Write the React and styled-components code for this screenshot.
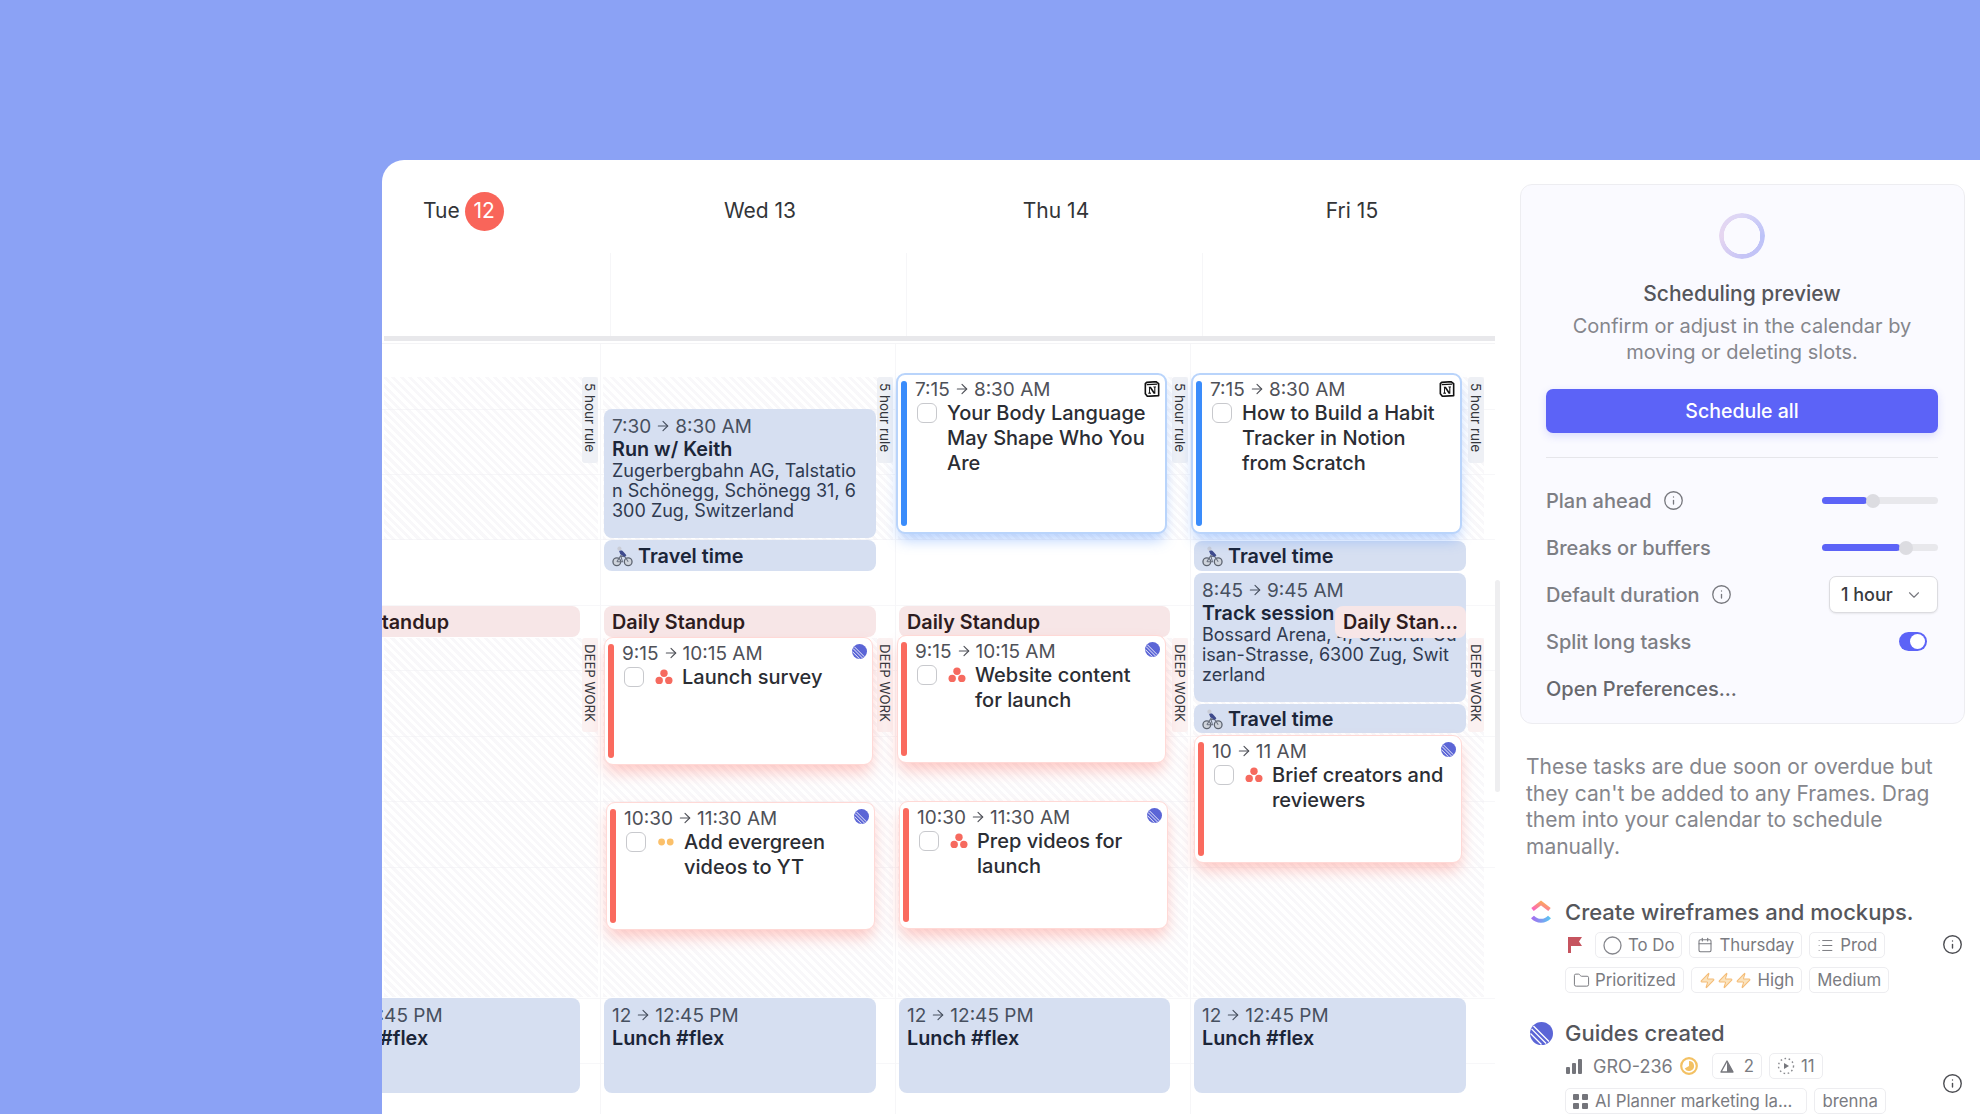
import React from 'react';
import styled, { createGlobalStyle, css } from 'styled-components';
import { ArrowRight, Calendar, ChevronDown, Folder, Info, List, Zap } from 'lucide-react';

const GlobalStyle = createGlobalStyle`
    html, body {
        margin: 0;
        height: 1114px;
        overflow: hidden;
        background: #8ba2f5;
        font-family: Inter, "Noto Sans", sans-serif;
    }
    * { box-sizing: border-box; }
`;

const Page = styled.div`
    height: 1114px;
    padding: 160px 0 0 382px;
    overflow: hidden;
`;

const AppWindow = styled.div`
    position: relative;
    display: flex;
    height: 954px;
    background: #fff;
    border-top-left-radius: 22px;
    overflow: hidden;
`;

const CalendarPane = styled.div`
    width: 1113px;
    flex-shrink: 0;
`;

const Head = styled.div`
    display: grid;
    grid-template-columns: 228px repeat(3, 296px);
    height: 176px;
`;

const HeadCell = styled.div`
    display: flex;
    flex-direction: column;
`;

const DayLabel = styled.div`
    display: flex;
    align-items: center;
    justify-content: ${({ $today }) => ($today ? 'flex-start' : 'center')};
    gap: 5px;
    height: 93px;
    padding: ${({ $today }) => ($today ? '33px 0 24px 41px' : '33px 0 24px 4px')};
    font-size: 21px;
    line-height: 36px;
    color: #333538;
`;

const TodayBadge = styled.span`
    display: flex;
    align-items: center;
    justify-content: center;
    width: 39px;
    height: 39px;
    border-radius: 50%;
    background: #f9655a;
    color: #fff;
    font-size: 21px;
`;

const AllDay = styled.div`
    flex: 1;
    border-left: ${({ $first }) => ($first ? 'none' : '1px solid #f6f6f8')};
`;

const HeadRule = styled.div`
    height: 5px;
    margin-left: 2px;
    background: #e8e8eb;
`;

const SubRule = styled.div`
    height: 3px;
    border-bottom: 1px solid #f4f4f6;
`;

const Grid = styled.div`
    display: grid;
    grid-template-columns: 218px 295px 295px 296px;
    height: 770px;
    background: repeating-linear-gradient(
        to bottom,
        transparent 0 64.5px,
        #f7f7f9 64.5px 65.5px
    );
`;

const Day = styled.div`
    position: relative;
    border-left: ${({ $first }) => ($first ? 'none' : '1px solid #f6f6f8')};
`;

const placed = css`
    position: absolute;
    top: ${({ $top }) => $top}px;
    left: ${({ $left }) => $left}px;
    height: ${({ $height }) => $height}px;
    width: ${({ $width }) => $width}px;
`;

const Hatch = styled.div`
    position: absolute;
    top: ${({ $top }) => $top}px;
    height: ${({ $height }) => $height}px;
    left: 2px;
    right: 2px;
    background: repeating-linear-gradient(
        45deg,
        rgba(240, 238, 243, 0.42) 0 3px,
        transparent 3px 6px
    );
`;

const FrameTag = styled.div`
    position: absolute;
    top: ${({ $top }) => $top}px;
    height: ${({ $height }) => $height}px;
    right: 2px;
    width: 16px;
    padding-top: 6px;
    display: flex;
    justify-content: flex-start;
    align-items: center;
    writing-mode: vertical-rl;
    border-radius: 3px;
    background: ${({ $deep }) => ($deep ? '#fbf1f1' : '#eef0f5')};
    color: #34363c;
    font-size: ${({ $deep }) => ($deep ? '13.2px' : '13.5px')};
    line-height: 16px;
    white-space: nowrap;
`;

const Block = styled.div`
    ${placed}
    z-index: ${({ $z }) => $z || 1};
    padding: ${({ $flat }) => ($flat ? '1px 8px 0' : '5px 8px 0')};
    border-radius: 8px;
    background: ${({ $tone }) => ($tone === 'red' ? '#f7e6e7' : '#d6dff1')};
    display: ${({ $flat }) => ($flat ? 'flex' : 'block')};
    align-items: center;
    overflow: hidden;
`;

const BlockTitle = styled.div`
    display: flex;
    align-items: center;
    gap: 5px;
    font-size: 19.8px;
    font-weight: 600;
    line-height: 23px;
    color: ${({ $tone }) => ($tone === 'red' ? '#2e1c20' : '#1b2538')};
    white-space: nowrap;
`;

const Address = styled.div`
    padding-right: ${({ $inset }) => $inset || 0}px;
    font-size: 18px;
    line-height: 20px;
    color: #2f3a50;
    word-break: break-all;
`;

const TimeRow = styled.div`
    display: flex;
    align-items: center;
    gap: 4px;
    height: 24px;
    font-size: 19px;
    color: ${({ $onBlock }) => ($onBlock ? '#47505f' : '#4f5158')};
    white-space: nowrap;
    svg { color: inherit; }
`;

const Card = styled.div`
    ${placed}
    z-index: 2;
    padding: ${({ $tone }) => ($tone === 'blue' ? '2px' : '3px')} 8px 0 17px;
    background: #fff;
    border-radius: 9px;
    ${({ $tone }) =>
        $tone === 'blue'
            ? css`
                  border: 2px solid #b9d4fb;
                  box-shadow: 0 9px 14px -3px rgba(70, 140, 255, 0.4);
              `
            : css`
                  border: 1.5px solid #ffd9d6;
                  box-shadow: 0 9px 16px -2px rgba(255, 110, 100, 0.38);
              `}
`;

const Bar = styled.div`
    position: absolute;
    left: 3px;
    top: 6px;
    bottom: 6px;
    width: 6px;
    border-radius: 3px;
    background: ${({ $tone }) => ($tone === 'blue' ? '#3a8cfb' : '#fa6a5e')};
`;

const Corner = styled.div`
    position: absolute;
    top: 6px;
    right: 5px;
    line-height: 0;
`;

const CardBody = styled.div`
    display: flex;
    align-items: flex-start;
`;

const Check = styled.div`
    flex-shrink: 0;
    width: 20px;
    height: 20px;
    margin: 2px 10px 0 2px;
    border: 1.5px solid #c8c9cd;
    border-radius: 6px;
`;

const Source = styled.div`
    flex-shrink: 0;
    width: 18px;
    height: 24px;
    margin: 0 9px 0 1px;
    display: flex;
    align-items: center;
`;

const CardTitle = styled.div`
    font-size: 20px;
    font-weight: 500;
    line-height: 25px;
    color: #2b2d33;
`;

const Overflow = styled.div`
    position: absolute;
    left: 1113px;
    top: 420px;
    width: 5px;
    height: 212px;
    background: #eeeef0;
    border-radius: 3px;
`;

const Side = styled.div`
    flex: 1;
    padding: 24px 15px 0 25px;
`;

const PreviewCard = styled.div`
    height: 540px;
    padding: 28px 26px 0 25px;
    background: #fafaff;
    border: 1px solid #ededf1;
    border-radius: 12px;
`;

const Spinner = styled.div`
    width: 46px;
    height: 46px;
    margin: 0 auto 21px;
    border-radius: 50%;
    background: conic-gradient(#dcd6f6, #bcc2f8, #c6c4f6, #e6d6f0, #dcd6f6);
    -webkit-mask: radial-gradient(circle, transparent 18px, #000 18.5px);
    mask: radial-gradient(circle, transparent 18px, #000 18.5px);
`;

const PreviewTitle = styled.div`
    font-size: 21px;
    font-weight: 500;
    line-height: 28px;
    color: #55565b;
    text-align: center;
    margin-bottom: 5px;
`;

const PreviewText = styled.div`
    font-size: 20px;
    line-height: 26px;
    color: #85868c;
    text-align: center;
    margin-bottom: 24px;
`;

const PrimaryButton = styled.div`
    display: flex;
    align-items: center;
    justify-content: center;
    height: 44px;
    border-radius: 7px;
    background: #5c63f7;
    box-shadow: 0 3px 8px rgba(92, 99, 247, 0.2);
    color: #fff;
    font-size: 19.5px;
    font-weight: 500;
`;

const Divider = styled.div`
    height: 1px;
    margin: 24px 0 19px;
    background: #e6e6ea;
`;

const SettingRow = styled.div`
    display: flex;
    align-items: center;
    justify-content: space-between;
    height: 47px;
`;

const SettingLabel = styled.div`
    display: flex;
    align-items: center;
    gap: 11px;
    font-size: 20px;
    font-weight: 500;
    color: ${({ $dark }) => ($dark ? '#66676c' : '#7d7e84')};
    svg { color: #77787e; }
`;

const Track = styled.div`
    position: relative;
    width: 116px;
    height: 7px;
    border-radius: 4px;
    background: #e8e8ec;
`;

const TrackFill = styled.div`
    height: 100%;
    width: ${({ $value }) => $value}%;
    border-radius: 4px;
    background: #5c63f7;
`;

const Thumb = styled.div`
    position: absolute;
    top: -3.5px;
    left: calc(${({ $value }) => $value}% - 1px);
    width: 14px;
    height: 14px;
    border-radius: 50%;
    background: #dcdce1;
`;

const Select = styled.div`
    display: flex;
    align-items: center;
    justify-content: space-between;
    width: 109px;
    height: 37px;
    padding: 0 14px 0 11px;
    background: #fff;
    border: 1px solid #dcdce0;
    border-radius: 7px;
    box-shadow: 0 1px 2px rgba(0, 0, 0, 0.08);
    font-size: 18px;
    font-weight: 500;
    color: #3a3b40;
    svg { color: #77787e; }
`;

const Toggle = styled.div`
    width: 28px;
    height: 19px;
    margin-right: 11px;
    padding: 2px;
    display: flex;
    justify-content: flex-end;
    border-radius: 10px;
    background: #5c63f7;
    &::after {
        content: '';
        width: 15px;
        height: 15px;
        border-radius: 50%;
        background: #fff;
    }
`;

const DueText = styled.p`
    margin: 30px 0 38px 6px;
    font-size: 21px;
    line-height: 26.5px;
    color: #85868c;
`;

const Task = styled.div`
    display: grid;
    grid-template-columns: 35px 1fr 21px;
    row-gap: 6px;
    margin: 0 2px 26px 10px;
`;

const TaskLogo = styled.div`
    display: flex;
    align-items: center;
    height: 28px;
`;

const TaskTitle = styled.div`
    grid-column: 2 / 4;
    font-size: 22px;
    font-weight: 500;
    line-height: 28px;
    color: #55565b;
`;

const ChipStack = styled.div`
    grid-column: 2;
    display: flex;
    flex-direction: column;
    gap: 9px;
`;

const ChipRow = styled.div`
    display: flex;
    align-items: center;
    gap: 7px;
`;

const Chip = styled.div`
    display: flex;
    align-items: center;
    gap: ${({ $gap }) => $gap || 6}px;
    height: 26px;
    padding: 0 ${({ $endPad }) => $endPad || 7}px 0 7px;
    border: 1px solid #ededf0;
    border-radius: 5px;
    font-size: 16.8px;
    color: #7a7b81;
    white-space: nowrap;
    svg { flex-shrink: 0; }
`;

const Bare = styled.div`
    display: flex;
    align-items: center;
    gap: 6px;
    width: 27px;
    flex-shrink: 0;
    margin-left: ${({ $inset }) => $inset || 0}px;
    margin-right: -7px;
`;

const TrackerId = styled.div`
    display: flex;
    align-items: center;
    gap: 7px;
    margin-right: 7px;
    font-size: 18px;
    color: #7a7b81;
`;

const InfoSlot = styled.div`
    grid-column: 3;
    margin-top: ${({ $offset }) => $offset}px;
    line-height: 0;
    color: #4d4e53;
`;

const LinearMark = ({ size = 15 }) => (
    <svg width={size} height={size} viewBox="0 0 24 24">
        <circle cx="12" cy="12" r="12" fill="#5b65d6" />
        <path
            d="M0.5 12 12 23.5M1.6 7.2 16.8 22.4M3.6 4.2 19.8 20.4"
            stroke="#fff"
            strokeWidth="1.4"
        />
    </svg>
);

const NotionMark = () => (
    <svg width="16" height="16" viewBox="0 0 24 24">
        <path d="M4 2 18 1l4 3v18l-17 1-3-4V4z" fill="#fff" stroke="#111" strokeWidth="2.4" strokeLinejoin="round" />
        <path d="M4 5.5 20 4.6" stroke="#111" strokeWidth="2" />
        <path d="M7 8.5h3.4l5 7.6V9.6l-1.4-.3V8.2h4v1.1l-1 .3V19h-2.6L9 11v6.4l1.5.4V19H6.4v-1.2l1.2-.4V9.6L7 9.4z" fill="#111" />
    </svg>
);

const AsanaMark = () => (
    <svg width="18" height="16" viewBox="0 0 18 16">
        <circle cx="9" cy="4.2" r="3.7" fill="#f66a5f" />
        <circle cx="4.2" cy="11.4" r="3.7" fill="#f66a5f" />
        <circle cx="13.8" cy="11.4" r="3.7" fill="#f66a5f" />
    </svg>
);

const PriorityDots = () => (
    <svg width="18" height="16" viewBox="0 0 18 16">
        <circle cx="4.6" cy="8" r="3.4" fill="#fbc06a" />
        <circle cx="13.2" cy="8" r="3.4" fill="#fbc06a" />
    </svg>
);

const BikeMark = () => (
    <svg width="21" height="21" viewBox="0 0 24 24">
        <circle cx="5.5" cy="18" r="4.4" fill="#cfd4dc" stroke="#5d6470" strokeWidth="1.5" />
        <circle cx="18.5" cy="18" r="4.4" fill="#cfd4dc" stroke="#5d6470" strokeWidth="1.5" />
        <path d="M5.5 18 10 11l5 1.5 3.5 5.5M10 11l2 7h-6" fill="none" stroke="#6b7280" strokeWidth="1.2" />
        <path d="M8 5.5c2-1.5 4-.5 5.5 1.5l3 3.5-2 2-5-3z" fill="#3e4a8c" />
        <circle cx="8.5" cy="3" r="2.4" fill="#c9ccd6" />
    </svg>
);

const ClickUpMark = () => (
    <svg width="22" height="24" viewBox="0 0 22 24">
        <defs>
            <linearGradient id="cuTop" x1="0" x2="1" y1="1" y2="0">
                <stop offset="0" stopColor="#fb62c0" />
                <stop offset="1" stopColor="#fbb14f" />
            </linearGradient>
            <linearGradient id="cuLow" x1="0" x2="1">
                <stop offset="0" stopColor="#a36ff0" />
                <stop offset="1" stopColor="#5cc3f2" />
            </linearGradient>
        </defs>
        <path d="M2.5 9.5 11 3l8.5 6.500" fill="none" stroke="url(#cuTop)" strokeWidth="4" />
        <path d="M2.500 17c4.500 5 12.500 5 17 0" fill="none" stroke="url(#cuLow)" strokeWidth="4" />
    </svg>
);

const FlagMark = () => (
    <svg width="14" height="16" viewBox="0 0 14 16">
        <path d="M0 0h14l-3 4.500L14 9H3v7H0z" fill="#c6545f" />
    </svg>
);

const BarsMark = () => (
    <svg width="16" height="15" viewBox="0 0 16 15" fill="#74757b">
        <rect x="0" y="8" width="4" height="7" rx="1" />
        <rect x="6" y="4" width="4" height="11" rx="1" />
        <rect x="12" y="0" width="4" height="15" rx="1" />
    </svg>
);

const ClockMark = () => (
    <svg width="18" height="18" viewBox="0 0 18 18">
        <circle cx="9" cy="9" r="7.800" fill="#fff" stroke="#f3c163" strokeWidth="2.200" />
        <path d="M9 4a5 5 0 1 1-4.300 7.500L9 9z" fill="#f3c163" />
    </svg>
);

const TriangleMark = () => (
    <svg width="14" height="13" viewBox="0 0 14 13">
        <path d="M7 1 13 12H1z" fill="#fff" stroke="#77787e" strokeWidth="1.400" strokeLinejoin="round" />
        <path d="M7 1 13 12H7z" fill="#77787e" />
    </svg>
);

const CycleMark = () => (
    <svg width="18" height="18" viewBox="0 0 18 18">
        <circle cx="9" cy="9" r="7.500" fill="none" stroke="#8a8b90" strokeWidth="1.400" strokeDasharray="1.600 2.600" />
        <path d="M7 6l5 3-5 3z" fill="#77787e" />
    </svg>
);

const GridMark = () => (
    <svg width="15" height="15" viewBox="0 0 15 15" fill="#74757b">
        <rect width="6" height="6" rx="1" />
        <rect x="9" width="6" height="6" rx="1" />
        <rect y="9" width="6" height="6" rx="1" />
        <rect x="9" y="9" width="6" height="6" rx="1" />
    </svg>
);

const Time = ({ from, to, onBlock }) => (
    <TimeRow $onBlock={onBlock}>
        {from}
        <ArrowRight size={16} strokeWidth={1.7} />
        {to}
    </TimeRow>
);

const Standup = ({ top = 262, left = 3, width = 272, height = 31, title = 'Daily Standup', z }) => (
    <Block $tone="red" $flat $top={top} $left={left} $width={width} $height={height} $z={z}>
        <BlockTitle $tone="red">{title}</BlockTitle>
    </Block>
);

const Travel = ({ top, left = 3, width = 272, height = 31 }) => (
    <Block $flat $top={top} $left={left} $width={width} $height={height}>
        <BlockTitle>
            <BikeMark />
            Travel time
        </BlockTitle>
    </Block>
);

const Lunch = ({ left = 3, width = 272 }) => (
    <Block $top={654} $left={left} $width={width} $height={95}>
        <Time from="12" to="12:45 PM" onBlock />
        <BlockTitle>Lunch #flex</BlockTitle>
    </Block>
);

const Located = ({ top, height, left = 3, width = 272, from, to, title, address, inset }) => (
    <Block $top={top} $left={left} $width={width} $height={height}>
        <Time from={from} to={to} onBlock />
        <BlockTitle>{title}</BlockTitle>
        <Address $inset={inset}>{address}</Address>
    </Block>
);

const TaskCard = ({ tone, top, left, height = 128, width = 269, from, to, title, mark }) => (
    <Card $tone={tone} $top={top} $left={left} $width={width} $height={height}>
        <Bar $tone={tone} />
        <Corner>{tone === 'blue' ? <NotionMark /> : <LinearMark />}</Corner>
        <Time from={from} to={to} />
        <CardBody>
            <Check />
            {mark && <Source>{mark}</Source>}
            <CardTitle>{title}</CardTitle>
        </CardBody>
    </Card>
);

const Bands = () => (
    <>
        <Hatch $top={33} $height={163} />
        <Hatch $top={294} $height={359} />
        <FrameTag $top={33} $height={86}>5 hour rule</FrameTag>
        <FrameTag $deep $top={294} $height={94}>DEEP WORK</FrameTag>
    </>
);

const Slider = ({ value }) => (
    <Track>
        <TrackFill $value={value} />
        <Thumb $value={value} />
    </Track>
);

export default function App() {
    return (
        <Page>
            <GlobalStyle />
            <AppWindow>
                <CalendarPane>
                    <Head>
                        <HeadCell>
                            <DayLabel $today>
                                Tue <TodayBadge>12</TodayBadge>
                            </DayLabel>
                            <AllDay $first />
                        </HeadCell>
                        <HeadCell>
                            <DayLabel>Wed 13</DayLabel>
                            <AllDay />
                        </HeadCell>
                        <HeadCell>
                            <DayLabel>Thu 14</DayLabel>
                            <AllDay />
                        </HeadCell>
                        <HeadCell>
                            <DayLabel>Fri 15</DayLabel>
                            <AllDay />
                        </HeadCell>
                    </Head>
                    <HeadRule />
                    <SubRule />
                    <Grid>
                        <Day $first>
                            <Bands />
                            <Standup left={-74} />
                            <Lunch left={-74} />
                        </Day>
                        <Day>
                            <Bands />
                            <Located
                                top={65}
                                height={129}
                                inset={4}
                                from="7:30"
                                to="8:30 AM"
                                title="Run w/ Keith"
                                address="Zugerbergbahn AG, Talstation Schönegg, Schönegg 31, 6300 Zug, Switzerland"
                            />
                            <Travel top={196} />
                            <Standup />
                            <TaskCard
                                tone="red"
                                top={293}
                                left={3}
                                from="9:15"
                                to="10:15 AM"
                                title="Launch survey"
                                mark={<AsanaMark />}
                            />
                            <TaskCard
                                tone="red"
                                top={458}
                                left={5}
                                from="10:30"
                                to="11:30 AM"
                                title="Add evergreen videos to YT"
                                mark={<PriorityDots />}
                            />
                            <Lunch />
                        </Day>
                        <Day>
                            <Bands />
                            <TaskCard
                                tone="blue"
                                top={29}
                                left={0}
                                height={161}
                                width={271}
                                from="7:15"
                                to="8:30 AM"
                                title="Your Body Language May Shape Who You Are"
                            />
                            <Standup left={3} width={271} />
                            <TaskCard
                                tone="red"
                                top={291}
                                left={1}
                                from="9:15"
                                to="10:15 AM"
                                title="Website content for launch"
                                mark={<AsanaMark />}
                            />
                            <TaskCard
                                tone="red"
                                top={457}
                                left={3}
                                from="10:30"
                                to="11:30 AM"
                                title="Prep videos for launch"
                                mark={<AsanaMark />}
                            />
                            <Lunch left={3} width={271} />
                        </Day>
                        <Day>
                            <Bands />
                            <TaskCard
                                tone="blue"
                                top={29}
                                left={0}
                                height={161}
                                width={271}
                                from="7:15"
                                to="8:30 AM"
                                title="How to Build a Habit Tracker in Notion from Scratch"
                            />
                            <Travel top={197} left={3} width={272} height={30} />
                            <Located
                                top={229}
                                height={129}
                                left={3}
                                width={272}
                                from="8:45"
                                to="9:45 AM"
                                title="Track session"
                                address="Bossard Arena, 4, General-Guisan-Strasse, 6300 Zug, Switzerland"
                            />
                            <Standup left={144} width={131} height={32} title="Daily Stan..." z={3} />
                            <Travel top={360} left={3} width={272} height={29} />
                            <TaskCard
                                tone="red"
                                top={391}
                                left={3}
                                width={268}
                                from="10"
                                to="11 AM"
                                title="Brief creators and reviewers"
                                mark={<AsanaMark />}
                            />
                            <Lunch left={3} width={272} />
                        </Day>
                    </Grid>
                </CalendarPane>
                <Overflow />
                <Side>
                    <PreviewCard>
                        <Spinner />
                        <PreviewTitle>Scheduling preview</PreviewTitle>
                        <PreviewText>
                            Confirm or adjust in the calendar by
                            <br />
                            moving or deleting slots.
                        </PreviewText>
                        <PrimaryButton>Schedule all</PrimaryButton>
                        <Divider />
                        <SettingRow>
                            <SettingLabel>
                                Plan ahead <Info size={21} strokeWidth={1.5} />
                            </SettingLabel>
                            <Slider value={39} />
                        </SettingRow>
                        <SettingRow>
                            <SettingLabel>Breaks or buffers</SettingLabel>
                            <Slider value={67} />
                        </SettingRow>
                        <SettingRow>
                            <SettingLabel>
                                Default duration <Info size={21} strokeWidth={1.5} />
                            </SettingLabel>
                            <Select>
                                1 hour <ChevronDown size={18} strokeWidth={1.5} />
                            </Select>
                        </SettingRow>
                        <SettingRow>
                            <SettingLabel>Split long tasks</SettingLabel>
                            <Toggle />
                        </SettingRow>
                        <SettingRow>
                            <SettingLabel $dark>Open Preferences...</SettingLabel>
                        </SettingRow>
                    </PreviewCard>
                    <DueText>
                        These tasks are due soon or overdue but they can't be added to any Frames. Drag them
                        into your calendar to schedule manually.
                    </DueText>
                    <Task>
                        <TaskLogo>
                            <ClickUpMark />
                        </TaskLogo>
                        <TaskTitle>Create wireframes and mockups.</TaskTitle>
                        <ChipStack>
                            <ChipRow>
                                <Bare $inset={3}>
                                    <FlagMark />
                                </Bare>
                                <Chip>
                                    <svg width="19" height="19" viewBox="0 0 19 19">
                                        <circle cx="9.5" cy="9.5" r="8.500" fill="none" stroke="#85868c" strokeWidth="1.300" />
                                    </svg>
                                    To Do
                                </Chip>
                                <Chip>
                                    <Calendar size={16} strokeWidth={1.6} />
                                    Thursday
                                </Chip>
                                <Chip>
                                    <List size={17} strokeWidth={1.4} />
                                    Prod
                                </Chip>
                            </ChipRow>
                            <ChipRow>
                                <Chip $gap={5}>
                                    <Folder size={17} strokeWidth={1.4} />
                                    Prioritized
                                </Chip>
                                <Chip $gap={1}>
                                    <Zap size={17} strokeWidth={1.5} color="#f4bc77" fill="#fbe3bd" />
                                    <Zap size={17} strokeWidth={1.5} color="#f4bc77" fill="#fbe3bd" />
                                    <Zap size={17} strokeWidth={1.5} color="#f4bc77" fill="#fbe3bd" />
                                    &nbsp;High
                                </Chip>
                                <Chip>Medium</Chip>
                            </ChipRow>
                        </ChipStack>
                        <InfoSlot $offset={2}>
                            <Info size={21} strokeWidth={1.6} />
                        </InfoSlot>
                    </Task>
                    <Task>
                        <TaskLogo>
                            <LinearMark size={23} />
                        </TaskLogo>
                        <TaskTitle>Guides created</TaskTitle>
                        <ChipStack>
                            <ChipRow>
                                <Bare $inset={1}>
                                    <BarsMark />
                                </Bare>
                                <TrackerId>
                                    GRO-236 <ClockMark />
                                </TrackerId>
                                <Chip $gap={10}>
                                    <TriangleMark />2
                                </Chip>
                                <Chip>
                                    <CycleMark />
                                    11
                                </Chip>
                            </ChipRow>
                            <ChipRow>
                                <Chip $gap={7} $endPad={14}>
                                    <GridMark />
                                    AI Planner marketing la...
                                </Chip>
                                <Chip>brenna</Chip>
                            </ChipRow>
                        </ChipStack>
                        <InfoSlot $offset={20}>
                            <Info size={21} strokeWidth={1.6} />
                        </InfoSlot>
                    </Task>
                </Side>
            </AppWindow>
        </Page>
    );
}
